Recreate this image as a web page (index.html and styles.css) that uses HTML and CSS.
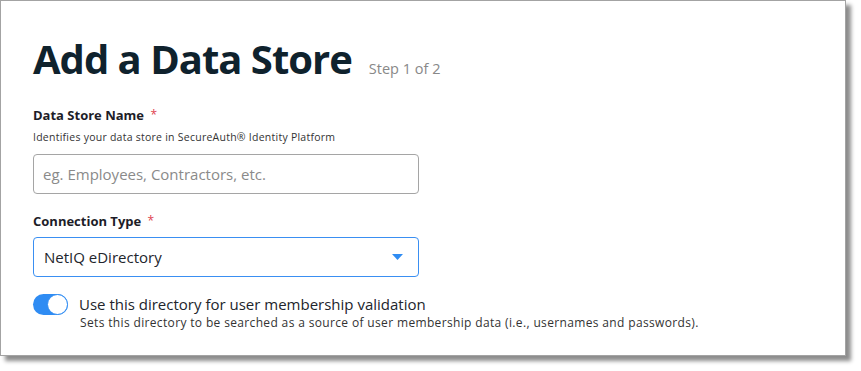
FILE: index.html
```html
<!DOCTYPE html>
<html>
<head>
<meta charset="utf-8">
<link rel="stylesheet" href="styles.css">
</head>
<body>
<div class="frame">
  <div class="header">
    <h1 class="title">Add a Data Store</h1>
    <span class="step">Step 1 of 2</span>
  </div>
  <div class="field field-name">
    <div class="label">Data Store Name <span class="req">*</span></div>
    <div class="hint">Identifies your data store in SecureAuth® Identity Platform</div>
    <div class="input placeholder">eg. Employees, Contractors, etc.</div>
  </div>
  <div class="field field-type">
    <div class="label">Connection Type <span class="req">*</span></div>
    <div class="input select">
      <span>NetIQ eDirectory</span>
      <svg class="caret" width="11" height="6" viewBox="0 0 11 6"><path d="M0 0h11L5.5 6z" fill="#2f8cf3"/></svg>
    </div>
  </div>
  <div class="toggle-row">
    <div class="toggle"><div class="knob"></div></div>
    <div class="toggle-text">
      <div class="toggle-title">Use this directory for user membership validation</div>
      <div class="toggle-desc">Sets this directory to be searched as a source of user membership data (i.e., usernames and passwords).</div>
    </div>
  </div>
</div>
</body>
</html>
```
FILE: styles.css
```css
html, body { margin: 0; padding: 0; background: #fff; }
body { font-family: "Open Sans", "DejaVu Sans", sans-serif; color: #1b2430; width: 861px; height: 371px; overflow: hidden; }
.frame {
  box-sizing: border-box;
  width: 846px;
  height: 356px;
  border: 1px solid #a3a3a3;
  box-shadow: 5px 5px 4px rgba(0,0,0,0.45);
  padding: 38px 0 0 32px;
  background: #fff;
}
.header { display: flex; align-items: baseline; height: 40px; }
.title { margin: 0; font-size: 40px; font-weight: 700; color: #0f222d; line-height: 40px; letter-spacing: -1px; }
.step { margin-left: 17px; font-size: 14.5px; color: #888; }
.field { width: 386px; }
.field-name { margin-top: 27px; }
.field-type { margin-top: 18px; }
.label { font-size: 13px; font-weight: 700; color: #1d1d28; line-height: 18px; }
.req { color: #e0424f; font-weight: 400; font-size: 12px; margin-left: 3px; vertical-align: top; line-height: 17px; }
.hint { font-size: 10.5px; letter-spacing: 0.25px; color: #333; margin-top: 6px; line-height: 14px; }
.input {
  box-sizing: border-box;
  height: 40px;
  border: 1px solid #a5a5a5;
  border-radius: 4px;
  display: flex;
  align-items: center;
  padding: 0 10px 0 9px;
  font-size: 15px;
  margin-top: 10px;
}
.placeholder { color: #8a8a8a; }
.select { border-color: #3a8ff2; justify-content: space-between; padding-left: 10px; color: #22252c; margin-top: 7px; }
.caret { margin-right: 5px; }
.toggle-row { display: flex; align-items: flex-start; margin-top: 17px; }
.toggle {
  width: 35px; height: 21px; border-radius: 11px; background: #2f8cf3;
  position: relative; flex: none;
}
.knob {
  position: absolute; right: 0; top: 0; box-sizing: border-box;
  width: 21px; height: 21px; border-radius: 50%; background: #fff; border: 1.5px solid #2f8cf3;
}
.toggle-text { margin-left: 11px; }
.toggle-title { font-size: 15px; color: #22252c; line-height: 20px; }
.toggle-desc { font-size: 12px; letter-spacing: 0.35px; color: #333; line-height: 16px; margin-top: 1px; margin-left: 1px; }
```
